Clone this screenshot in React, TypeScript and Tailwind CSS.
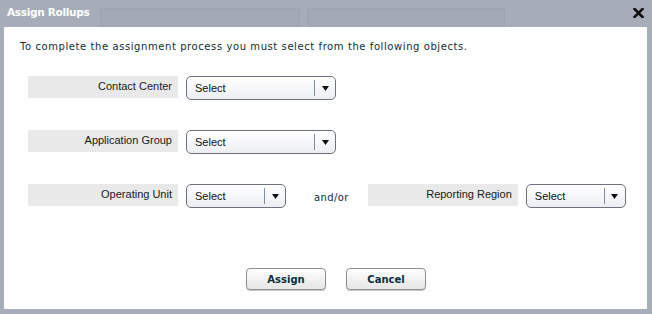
import React from "react";

const Dropdown = ({ width }: { width: string }) => {
  return (
    <div
      className={`${width} flex h-[24px] items-center rounded-[5px] border border-[#6d737c] bg-gradient-to-b from-white to-[#eceef2]`}
    >
      <span className="flex-1 pl-[8px] pt-[1px] font-['Liberation_Sans',Arial,sans-serif] text-[11px] text-[#111]">
        Select
      </span>
      <span className="h-[16px] w-px bg-[#7d8fa3]" />
      <span className="flex w-[20px] items-center justify-center">
        <svg width="7" height="5" viewBox="0 0 7 5">
          <path d="M0 0 L7 0 L3.5 5 Z" fill="#111" />
        </svg>
      </span>
    </div>
  );
};

const Label = ({ text }: { text: string }) => {
  return (
    <div className="h-[22px] w-[150px] bg-[#e9e9ea] pr-[6px] pt-[2px] text-right font-['Liberation_Sans',Arial,sans-serif] text-[11px] text-[#1a1a1a]">
      {text}
    </div>
  );
};

const Button = ({ text }: { text: string }) => {
  return (
    <button className="h-[22px] w-[80px] rounded-[4px] border border-[#8b9097] bg-gradient-to-b from-white to-[#e6e6e6] font-['DejaVu_Sans',Verdana,sans-serif] text-[10px] font-bold text-[#0c2f3b] shadow-[0_1px_0_#c8c8c8]">
      {text}
    </button>
  );
};

const App = () => {
  return (
    <div className="relative flex h-[314px] w-[652px] flex-col overflow-hidden bg-[#a6adb8]">
      {/* faded tabs behind the dialog */}
      <div className="absolute left-[100px] top-[8px] h-[24px] w-[200px] border border-[#9ea5b0] bg-[#a2a9b4]" />
      <div className="absolute left-[307px] top-[8px] h-[24px] w-[198px] border border-[#9ea5b0] bg-[#a2a9b4]" />

      <div className="relative flex h-[27px] items-start justify-between pl-[7px] pr-[8px] pt-[5px]">
        <span className="font-['DejaVu_Sans',Verdana,sans-serif] text-[10.5px] font-bold tracking-[-0.3px] text-white">
          Assign Rollups
        </span>
        <svg width="11" height="10" viewBox="0 0 11 10" className="mt-[3px]">
          <path d="M1.5 1 L9.5 9 M9.5 1 L1.5 9" stroke="#111" strokeWidth="2.6" strokeLinecap="square" />
        </svg>
      </div>

      <div className="relative ml-[4px] flex h-[282px] w-[643px] flex-col bg-white">
        <p className="pl-[16px] pt-[12px] font-['DejaVu_Sans',Verdana,sans-serif] text-[10px] tracking-[0.58px] text-[#0c2f3b]">
          To complete the assignment process you must select from the following objects.
        </p>

        <div className="mt-[22px] flex items-start gap-[8px] pl-[24px]">
          <Label text="Contact Center" />
          <Dropdown width="w-[150px]" />
        </div>

        <div className="mt-[30px] flex items-start gap-[8px] pl-[24px]">
          <Label text="Application Group" />
          <Dropdown width="w-[150px]" />
        </div>

        <div className="mt-[30px] flex items-start pl-[24px]">
          <Label text="Operating Unit" />
          <div className="ml-[8px]">
            <Dropdown width="w-[100px]" />
          </div>
          <span className="ml-[28px] pt-[6px] font-['DejaVu_Sans',Verdana,sans-serif] text-[10px] tracking-[0.4px] text-[#0c2f3b]">
            and/or
          </span>
          <div className="ml-[19px]">
            <Label text="Reporting Region" />
          </div>
          <div className="ml-[8px]">
            <Dropdown width="w-[100px]" />
          </div>
        </div>

        <div className="mt-[60px] flex justify-center gap-[20px] pl-[21px]">
          <Button text="Assign" />
          <Button text="Cancel" />
        </div>
      </div>
    </div>
  );
};

export default App;
